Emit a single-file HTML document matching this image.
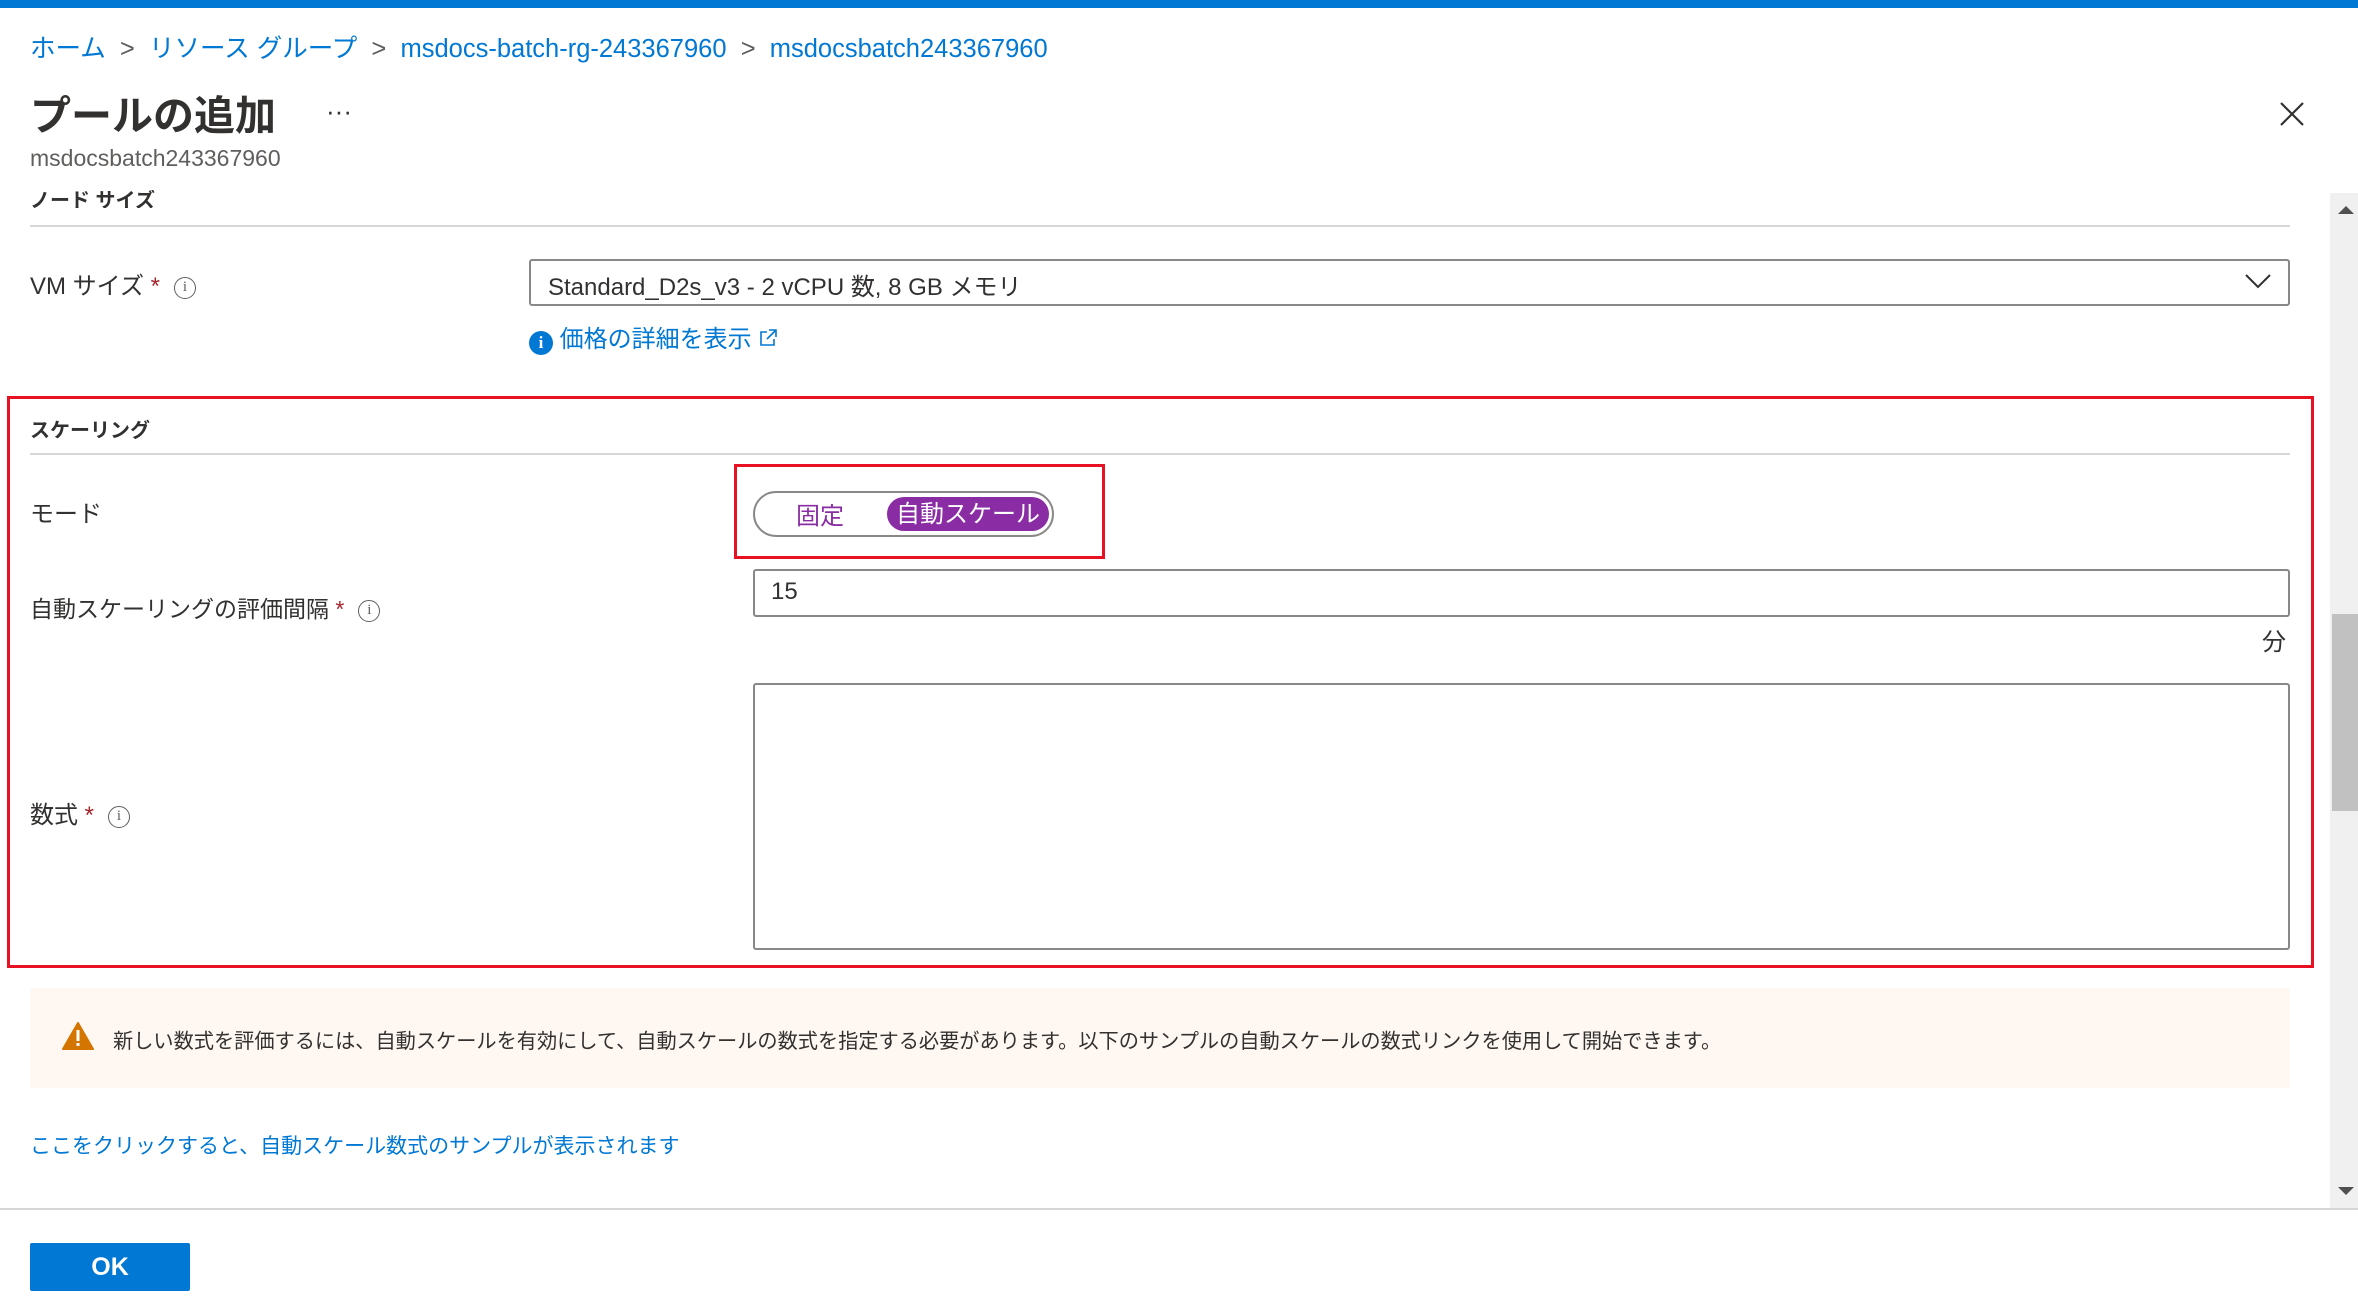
<!DOCTYPE html>
<html><head><meta charset="utf-8"><style>
*{box-sizing:border-box;margin:0;padding:0}
body{width:2358px;height:1302px;position:relative;background:#fff;font-family:"Segoe UI","Liberation Sans","Noto Sans CJK JP",sans-serif;color:#323130;overflow:hidden}
.a{position:absolute;white-space:nowrap}
.lnk{color:#0078d4}
.lbl{font-size:24px;color:#323130}
.req{color:#a4262c}
.info{display:inline-block;width:22px;height:22px;border:1.5px solid #605e5c;border-radius:50%;font-size:15px;line-height:19px;text-align:center;color:#605e5c;font-family:"Liberation Serif",serif;vertical-align:middle;margin-left:14px}
.box{position:absolute;border:2px solid #8a8886;border-radius:3px;background:#fff}
</style></head><body>
<div class="a" style="left:0;top:0;width:2358px;height:8px;background:#0078d4"></div>
<div class="a lnk" style="left:30px;top:28px;font-size:25.5px">ホーム <span style="color:#605e5c">&nbsp;&gt;&nbsp;</span> リソース グループ <span style="color:#605e5c">&nbsp;&gt;&nbsp;</span> msdocs-batch-rg-243367960 <span style="color:#605e5c">&nbsp;&gt;&nbsp;</span> msdocsbatch243367960</div>
<div class="a" style="left:30px;top:82px;font-size:41px;font-weight:bold;color:#323130">プールの追加</div>
<div class="a" style="left:326px;top:96px;font-size:26px;color:#323130">···</div>
<div class="a" style="left:30px;top:145px;font-size:23px;color:#605e5c">msdocsbatch243367960</div>
<svg class="a" style="left:2278px;top:100px" width="28" height="28"><path d="M3 3L25 25M25 3L3 25" stroke="#323130" stroke-width="2.2"/></svg>
<div class="a" style="left:0;top:190px;width:2330px;height:18px;overflow:hidden"><div class="a" style="left:30px;top:-6px;font-size:20px;font-weight:bold">ノード サイズ</div></div>
<div class="a" style="left:30px;top:225px;width:2260px;height:2px;background:#d6d6d6"></div>
<div class="a" style="left:2330px;top:193px;width:28px;height:1016px;background:#f0f0f0"></div>
<div class="a" style="left:2332px;top:614px;width:26px;height:197px;background:#c1c1c1"></div>
<svg class="a" style="left:2338px;top:205px" width="16" height="10"><path d="M0 9L8 1L16 9Z" fill="#505050"/></svg>
<svg class="a" style="left:2338px;top:1186px" width="16" height="10"><path d="M0 1L8 9L16 1Z" fill="#505050"/></svg>
<div class="a lbl" style="left:30px;top:266px">VM サイズ <span class="req">*</span><span class="info">i</span></div>
<div class="box" style="left:529px;top:259px;width:1761px;height:47px"></div>
<div class="a" style="left:548px;top:267px;font-size:24px">Standard_D2s_v3 - 2 vCPU 数, 8 GB メモリ</div>
<svg class="a" style="left:2244px;top:273px" width="28" height="16"><path d="M2 2L14 14L26 2" stroke="#323130" stroke-width="2" fill="none"/></svg>
<div class="a lnk" style="left:529px;top:319px;font-size:24px"><span style="display:inline-block;width:24px;height:24px;border-radius:50%;background:#0078d4;color:#fff;font-size:17px;line-height:24px;text-align:center;font-weight:bold;font-family:'Liberation Serif',serif;vertical-align:-1px">i</span> 価格の詳細を表示 <svg width="20" height="20" style="vertical-align:-1px"><path d="M9 4H3V17H16V11M11 2H18V9M18 2L9 11" stroke="#0078d4" stroke-width="1.6" fill="none"/></svg></div>
<div class="a" style="left:7px;top:396px;width:2307px;height:572px;border:3px solid #e81123"></div>
<div class="a" style="left:30px;top:414px;font-size:20px;font-weight:bold">スケーリング</div>
<div class="a" style="left:30px;top:453px;width:2260px;height:2px;background:#d6d6d6"></div>
<div class="a lbl" style="left:30px;top:494px">モード</div>
<div class="a" style="left:734px;top:464px;width:371px;height:95px;border:3px solid #e81123"></div>
<div class="a" style="left:753px;top:491px;width:301px;height:46px;border:2px solid #8a8886;border-radius:23px"></div>
<div class="a" style="left:796px;top:496px;font-size:24px;color:#8a2da5">固定</div>
<div class="a" style="left:887px;top:497px;width:162px;height:34px;background:#8a2da5;border-radius:17px;color:#fff;font-size:24px;text-align:center;line-height:36px">自動スケール</div>
<div class="a lbl" style="left:30px;top:590px;font-size:23px">自動スケーリングの評価間隔 <span class="req">*</span><span class="info">i</span></div>
<div class="box" style="left:753px;top:569px;width:1537px;height:48px"></div>
<div class="a" style="left:771px;top:578px;font-size:24px">15</div>
<div class="a" style="left:2262px;top:622px;font-size:24px">分</div>
<div class="a lbl" style="left:30px;top:795px">数式 <span class="req">*</span><span class="info">i</span></div>
<div class="box" style="left:753px;top:683px;width:1537px;height:267px"></div>
<div class="a" style="left:30px;top:988px;width:2260px;height:100px;background:#fff8f2;border-radius:3px"></div>
<svg class="a" style="left:62px;top:1021px" width="32" height="30"><path d="M16 2L31 28H1Z" fill="#d47500" stroke="#d47500" stroke-width="2" stroke-linejoin="round"/><rect x="14.5" y="9" width="3" height="11" fill="#fff"/><rect x="14.5" y="22" width="3" height="3" fill="#fff"/></svg>
<div class="a" style="left:113px;top:1025px;font-size:20.2px">新しい数式を評価するには、自動スケールを有効にして、自動スケールの数式を指定する必要があります。以下のサンプルの自動スケールの数式リンクを使用して開始できます。</div>
<div class="a lnk" style="left:30px;top:1130px;font-size:21px">ここをクリックすると、自動スケール数式のサンプルが表示されます</div>
<div class="a" style="left:0;top:1208px;width:2358px;height:2px;background:#d6d6d6"></div>
<div class="a" style="left:30px;top:1243px;width:160px;height:48px;background:#0078d4;border-radius:2px;color:#fff;font-size:25px;font-weight:bold;text-align:center;line-height:48px">OK</div>
</body></html>
